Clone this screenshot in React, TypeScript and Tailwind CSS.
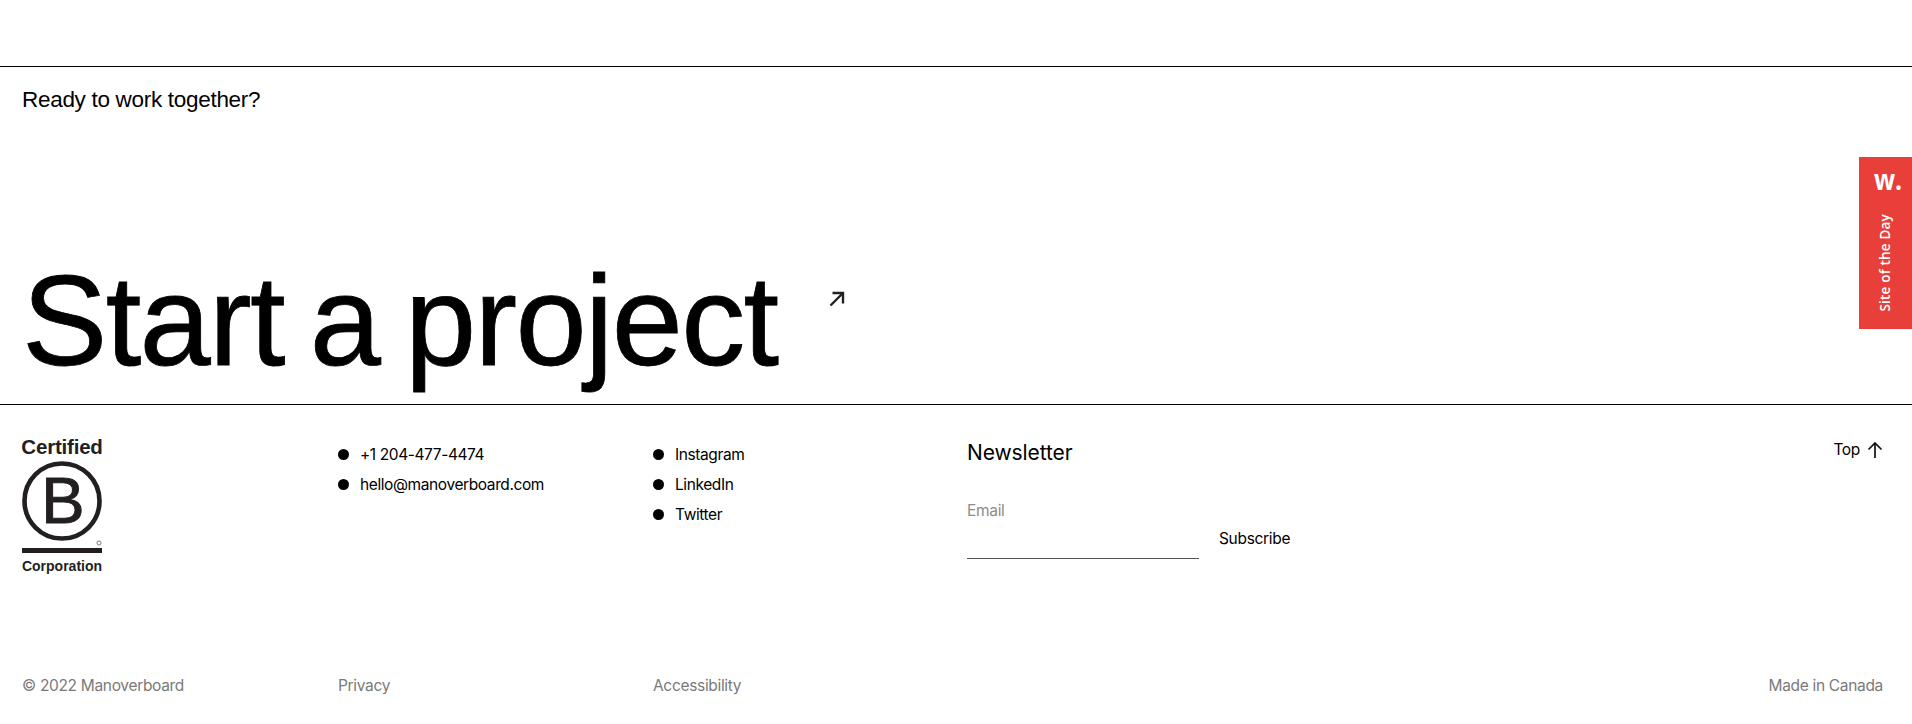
import React from "react";

const contact = ["+1 204-477-4474", "hello@manoverboard.com"];
const social = ["Instagram", "LinkedIn", "Twitter"];

function Bullets({ items }: { items: string[] }) {
  return (
    <ul className="flex flex-col gap-[10px] pt-[40px]">
      {items.map((item) => (
        <li key={item} className="flex h-[20px] items-center gap-[11px] text-[15.5px] leading-[20px] tracking-[-0.4px] text-black">
          <span className="mb-[2px] h-[11px] w-[11px] rounded-full bg-black" />
          {item}
        </li>
      ))}
    </ul>
  );
}

function BCorpLogo() {
  return (
    <div className="flex w-[80px] flex-col items-center pt-[31px] font-['Liberation_Sans',sans-serif] font-bold text-[#231f20]">
      <span className="text-[20.5px] leading-[22px] tracking-[-0.2px]">Certified</span>
      <svg width="80" height="92" viewBox="0 0 80 92" className="mt-[3px]">
        <circle cx="40" cy="40" r="37.5" fill="none" stroke="#231f20" strokeWidth="4.6" />
        <text x="41" y="62" textAnchor="middle" fontSize="65" fontWeight="400" fontFamily="Liberation Sans, sans-serif" fill="#231f20" stroke="#231f20" strokeWidth="1">
          B
        </text>
        <circle cx="77" cy="82" r="2" fill="none" stroke="#777" strokeWidth="1" />
        <rect x="0" y="87" width="80" height="5" fill="#231f20" />
      </svg>
      <span className="mt-[4px] text-[14px] leading-[18px]">Corporation</span>
    </div>
  );
}

export default function App() {
  return (
    <div className="relative h-[724px] overflow-hidden bg-white font-['Inter',sans-serif] text-black">
      <div className="h-[67px] border-b border-black" />

      <section className="flex h-[338px] flex-col justify-between border-b border-black px-[22px]">
        <p className="pt-[19px] font-['Liberation_Sans',sans-serif] text-[22.5px] leading-[28px] tracking-[-0.3px]">Ready to work together?</p>
        <div className="flex items-start">
          <h2 className="pb-[8px] font-['Liberation_Sans',sans-serif] text-[128px] leading-[150px] tracking-[-1.7px] [word-spacing:-8px] [-webkit-text-stroke:0.8px_black]">Start a project</h2>
          <svg width="16" height="16" viewBox="0 0 16 16" fill="none" stroke="#222" strokeWidth="2.4" className="ml-[52px] mt-[45px]">
            <path d="M1.5 14.5 14 2M3.5 2H14v10.5" />
          </svg>
        </div>
      </section>

      <footer className="pl-[22px] pr-[29px]">
        <div className="grid h-[306px] grid-cols-[316px_315px_315px_1fr] grid-rows-[1fr_auto]">
          <BCorpLogo />
          <Bullets items={contact} />
          <Bullets items={social} />
          <div className="flex justify-between">
            <div className="-ml-px pt-[34px]">
              <h3 className="text-[21px] leading-[28px] tracking-[-0.1px]">Newsletter</h3>
              <div className="mt-[34px] flex items-start gap-[20px]">
                <div className="w-[232px] border-b border-[#555] pb-[37px]">
                  <span className="block text-[15.5px] leading-[20px] tracking-[-0.32px] text-[#8c8c8c]">Email</span>
                </div>
                <span className="mt-[28px] text-[15.5px] leading-[20px] tracking-[-0.32px]">Subscribe</span>
              </div>
            </div>
            <div className="mt-[35px] flex h-[20px] items-center gap-[7px] text-[15.5px] tracking-[-0.32px]">
              Top
              <svg width="16" height="18" viewBox="0 0 16 18" fill="none" stroke="#111" strokeWidth="1.7">
                <path d="M8 17V2M1.5 8.5 8 2l6.5 6.5" />
              </svg>
            </div>
          </div>

          <span className="pb-[15px] text-[15.5px] leading-[20px] tracking-[-0.32px] text-[#7a7a7a]">© 2022 Manoverboard</span>
          <span className="text-[15.5px] leading-[20px] tracking-[-0.32px] text-[#7a7a7a]">Privacy</span>
          <span className="text-[15.5px] leading-[20px] tracking-[-0.32px] text-[#7a7a7a]">Accessibility</span>
          <span className="text-right text-[15.5px] leading-[20px] tracking-[-0.32px] text-[#7a7a7a]">Made in Canada</span>
        </div>
      </footer>

      <div className="absolute right-0 top-[157px] flex h-[172px] w-[53px] flex-col items-center bg-[#e83f3a] text-white">
        <span className="mt-[4px] origin-right scale-x-[0.85] font-['Open_Sans',sans-serif] text-[29px] font-bold leading-[36px]">w.</span>
        <span className="mt-[17px] -translate-x-px rotate-180 font-['Open_Sans',sans-serif] text-[13.5px] font-semibold leading-[18px] tracking-[0.2px] [writing-mode:vertical-rl]">
          Site of the Day
        </span>
      </div>
    </div>
  );
}
